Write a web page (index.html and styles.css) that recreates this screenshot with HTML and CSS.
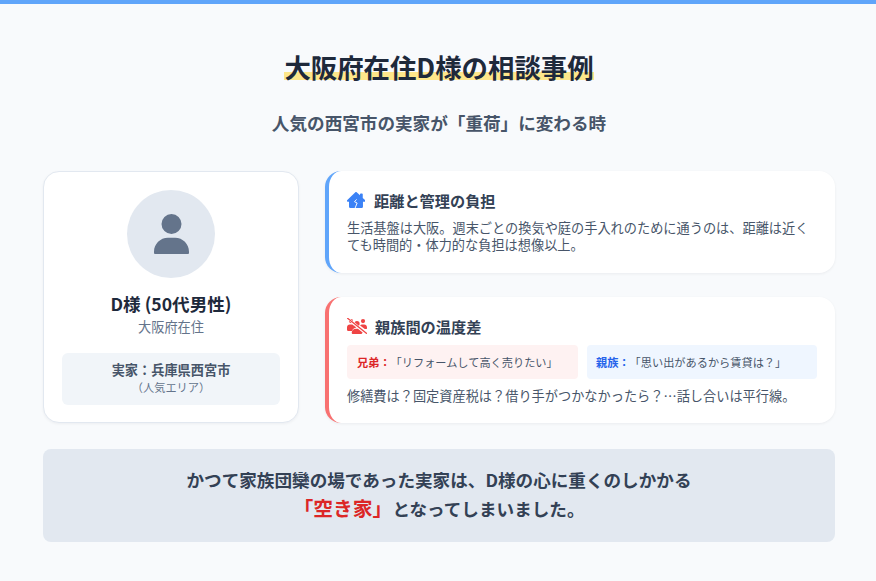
FILE: index.html
```html
<!DOCTYPE html>
<html lang="ja">
<head>
<meta charset="utf-8">
<title>大阪府在住D様の相談事例</title>
<link rel="stylesheet" href="styles.css">
</head>
<body>
<main class="page">
  <header class="head">
    <h1 class="title"><span class="mark">大阪府在住D様の相談事例</span></h1>
    <p class="subtitle">人気の西宮市の実家が「重荷」に変わる時</p>
  </header>
  <section class="columns">
    <article class="profile">
      <div class="avatar">
        <svg class="avatar-icon" viewBox="0 0 448 512"><path d="M224 256a128 128 0 1 0 0-256 128 128 0 1 0 0 256zm-45.700 48C79.800 304 0 383.800 0 482.300V500c0 7 5 12 12 12h424c7 0 12-5 12-12v-17.700C448 383.800 368.200 304 269.700 304z"/></svg>
      </div>
      <h2 class="name">D様 (50代男性)</h2>
      <p class="place">大阪府在住</p>
      <div class="home-box">
        <p class="home-main">実家：兵庫県西宮市</p>
        <p class="home-note">（人気エリア）</p>
      </div>
    </article>
    <div class="cards">
      <article class="card card-blue">
        <h3 class="card-title">
          <svg class="icon icon-house" viewBox="0 0 576 512"><path d="M288 0c8 0 15 3 21 8l107 94V72c0-13 11-24 24-24h40c13 0 24 11 24 24v121l75 66c10 9 13 23 8 35s-16 20-29 20h-47v146c0 29-23 52-52 52H117c-29 0-53-23-53-52V314H32c-13 0-25-8-30-20s-2-26 8-35L267 8c6-5 13-8 21-8z"/><path class="crack" d="M306 236l-66 76 84 40-64 160"/></svg>
          <span>距離と管理の負担</span>
        </h3>
        <p class="card-text">生活基盤は大阪。週末ごとの換気や庭の手入れのために通うのは、距離は近くても時間的・体力的な負担は想像以上。</p>
      </article>
      <article class="card card-red">
        <h3 class="card-title title-tight">
          <svg class="icon icon-people" viewBox="0 0 640 512"><circle cx="128" cy="96" r="68"/><circle cx="512" cy="96" r="68"/><circle cx="320" cy="180" r="84"/><path d="M0 300c0-50 40-90 90-90h60c14 0 28 4 40 10l110 86c-70 10-125 52-140 110H30c-17 0-30-13-30-30zM640 300c0-50-40-90-90-90h-70c-24 0-46 10-62 26l150 118h42c17 0 30-13 30-30zM150 470c0-70 60-128 130-128h70l150 120c-6 26-28 50-60 50H192c-23 0-42-19-42-42z"/><path class="slash-halo" d="M20 10l600 480"/><path class="slash" d="M20 10l600 480"/></svg>
          <span>親族間の温度差</span>
        </h3>
        <div class="quotes">
          <p class="quote quote-red"><b>兄弟：</b><span>「リフォームして高く売りたい」</span></p>
          <p class="quote quote-blue"><b>親族：</b><span>「思い出があるから賃貸は？」</span></p>
        </div>
        <p class="card-text">修繕費は？固定資産税は？借り手がつかなかったら？…話し合いは平行線。</p>
      </article>
    </div>
  </section>
  <section class="banner">
    <p>かつて家族団欒の場であった実家は、D様の心に重くのしかかる</p>
    <p><em>「空き家」</em>となってしまいました。</p>
  </section>
</main>
</body>
</html>
```
FILE: styles.css
```css
* { box-sizing: border-box; margin: 0; padding: 0; }
html, body { width: 876px; height: 581px; overflow: hidden; }
body {
  font-family: "Noto Sans CJK JP", "Noto Sans", sans-serif;
  background: #f8fafc;
  color: #1e293b;
  border-top: 4px solid #60a5fa;
}
.page { padding: 44px 41px 0 43px; display: flex; flex-direction: column; }
.head { text-align: center; }
.title { font-size: 26.4px; line-height: 37px; font-weight: 700; color: #1e293b; }
.mark { background: linear-gradient(transparent 63%, #fde68a 63%, #fde68a 85%, transparent 85%); border-radius: 4px; }
.subtitle { margin-top: 26px; font-size: 17.6px; line-height: 24px; font-weight: 700; color: #475569; }
.columns { display: flex; gap: 26px; margin-top: 36px; }
.profile {
  width: 256px; height: 252px; background: #fff; border: 1px solid #e2e8f0; border-radius: 16px;
  box-shadow: 0 1px 3px rgba(15,23,42,.05);
  display: flex; flex-direction: column; align-items: center; padding: 18px 18px 0;
}
.avatar { width: 88px; height: 88px; border-radius: 50%; background: #e2e8f0; display: flex; align-items: center; justify-content: center; }
.avatar-icon { width: 35px; height: 40px; fill: #64748b; }
.name { margin-top: 13px; font-size: 17.6px; line-height: 26px; font-weight: 700; color: #1e293b; }
.place { font-size: 13.2px; line-height: 19px; color: #64748b; }
.home-box { margin-top: 17px; width: 218px; height: 52px; background: #f1f5f9; border-radius: 6px; text-align: center; padding-top: 8px; }
.home-main { font-size: 13.2px; line-height: 18px; font-weight: 700; color: #475569; }
.home-note { font-size: 11.2px; line-height: 16px; color: #64748b; }
.cards { flex: 1; display: flex; flex-direction: column; gap: 24px; }
.card { background: #fff; border-left: 4px solid; border-radius: 16px; box-shadow: 0 1px 3px rgba(15,23,42,.06); padding: 17px 18px 0; }
.card-blue { border-color: #60a5fa; height: 102px; }
.card-red { border-color: #f87171; height: 126px; }
.card-title { display: flex; align-items: center; gap: 9px; font-size: 15.2px; line-height: 24px; font-weight: 700; color: #334155; }
.title-tight { gap: 8px; }
.icon { width: 18px; height: 16px; flex: none; }
.icon-house { fill: #3b82f6; }
.crack { fill: none; stroke: #fff; stroke-width: 30; }
.icon-people { fill: #ef4444; width: 20px; }
.slash-halo { fill: none; stroke: #fff; stroke-width: 76; }
.slash { fill: none; stroke: #ef4444; stroke-width: 42; stroke-linecap: round; }
.card-text { font-size: 13.2px; line-height: 17px; color: #475569; margin-top: 7px; }
.card-red .card-text { margin-top: 8px; line-height: 18px; }
.quotes { display: flex; gap: 9px; margin-top: 7px; }
.quote { flex: 1; display: flex; align-items: center; height: 34px; font-size: 11.2px; color: #475569; border-radius: 4px; padding-left: 10px; }
.quote b { font-weight: 700; }
.quote-red { background: #fef2f2; }
.quote-red b { color: #dc2626; }
.quote-blue { background: #eff6ff; padding-left: 9px; }
.quote-blue b { color: #2563eb; }
.banner { margin-top: 26px; width: 792px; height: 93px; background: #e2e8f0; border-radius: 8px; text-align: center; padding-top: 16px; font-size: 17.6px; line-height: 29px; font-weight: 700; color: #334155; }
.banner em { font-style: normal; font-size: 19.8px; line-height: 28px; color: #dc2626; }
```
